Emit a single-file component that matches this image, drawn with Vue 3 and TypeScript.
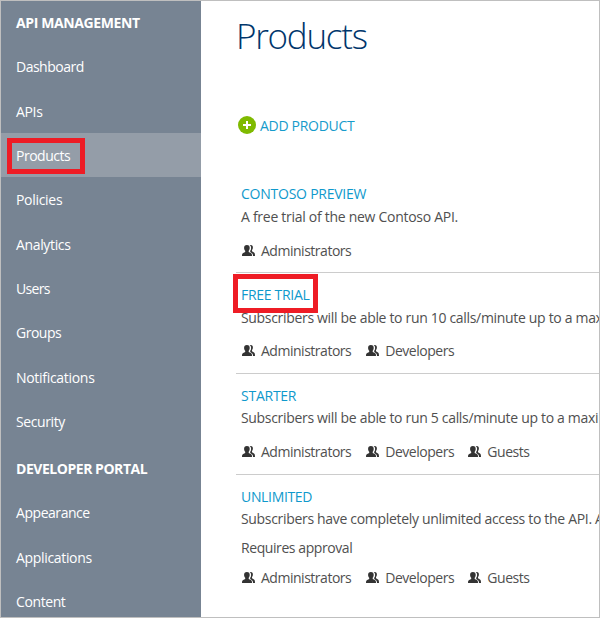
<script setup lang="ts">
interface NavItem {
  label: string
  fit: string
  heading?: boolean
  active?: boolean
}

interface Product {
  name: string
  fit: string
  description: string
  spacing: string
  approval?: string
  groups: string[]
  marked?: boolean
}

const nav: NavItem[] = [
  { label: 'API MANAGEMENT', fit: '-0.38px', heading: true },
  { label: 'Dashboard', fit: '-0.5px' },
  { label: 'APIs', fit: '-0.35px' },
  { label: 'Products', fit: '-0.5px', active: true },
  { label: 'Policies', fit: '-0.3px' },
  { label: 'Analytics', fit: '-0.35px' },
  { label: 'Users', fit: '-0.65px' },
  { label: 'Groups', fit: '-0.5px' },
  { label: 'Notifications', fit: '-0.3px' },
  { label: 'Security', fit: '-0.4px' },
  { label: 'DEVELOPER PORTAL', fit: '-0.46px', heading: true },
  { label: 'Appearance', fit: '-0.45px' },
  { label: 'Applications', fit: '-0.33px' },
  { label: 'Content', fit: '-0.4px' },
]

const products: Product[] = [
  {
    name: 'CONTOSO PREVIEW',
    fit: '-0.24px',
    description: 'A free trial of the new Contoso API.',
    spacing: '-0.28px',
    groups: ['Administrators'],
  },
  {
    name: 'FREE TRIAL',
    fit: '-0.3px',
    description: 'Subscribers will be able to run 10 calls/minute up to a maximum',
    spacing: '-0.32px',
    groups: ['Administrators', 'Developers'],
    marked: true,
  },
  {
    name: 'STARTER',
    fit: '-0.25px',
    description: 'Subscribers will be able to run 5 calls/minute up to a maximum',
    spacing: '-0.32px',
    groups: ['Administrators', 'Developers', 'Guests'],
  },
  {
    name: 'UNLIMITED',
    fit: '-0.33px',
    description: 'Subscribers have completely unlimited access to the API. A',
    spacing: '-0.32px',
    approval: 'Requires approval',
    groups: ['Administrators', 'Developers', 'Guests'],
  },
]
</script>

<template>
  <div class="window">
    <nav class="sidebar">
      <div
        v-for="item in nav"
        :key="item.label"
        class="nav-item"
        :class="{ heading: item.heading, active: item.active }"
      >
        <span class="nav-label" :style="{ letterSpacing: item.fit }">{{ item.label }}</span>
        <span v-if="item.active" class="marker nav-marker"></span>
      </div>
    </nav>
    <main class="content">
      <h1 class="title">Products</h1>
      <a class="add">
        <svg class="add-icon" viewBox="0 0 18 18">
          <circle cx="9" cy="9" r="9" fill="#7fba00" />
          <path d="M5 9h8M9 5v8" stroke="#fff" stroke-width="2" />
        </svg>
        <span class="add-label">ADD PRODUCT</span>
      </a>
      <section v-for="product in products" :key="product.name" class="product">
        <a class="name" :style="{ letterSpacing: product.fit }">{{ product.name }}</a>
        <span v-if="product.marked" class="marker product-marker"></span>
        <p class="description" :style="{ letterSpacing: product.spacing }">{{ product.description }}</p>
        <p v-if="product.approval" class="approval">{{ product.approval }}</p>
        <div class="groups">
          <span v-for="group in product.groups" :key="group" class="group">
            <svg class="people" viewBox="0 0 13 11">
              <path
                d="M7.600 0h1.200c1.400 0 2.200 1 2.100 2.600 0 1.200-.4 2-.9 2.600v1l2 1.300c.7.5 1 1.200 1 3.500h-2c-.1-1.600-.4-2.300-1.400-2.900L8.200 7V5.800c.6-.7.9-1.700.9-2.900 0-1.300-.5-2.300-1.500-2.900z"
                fill="#333"
              />
              <path
                d="M4.900 0c1.900 0 2.900 1.200 2.800 3 0 1.200-.4 2.200-1 2.800v1.100l2.100 1c1 .5 1.200 1.300 1.200 3.100H0c0-1.800.2-2.600 1.200-3.100l2-1V5.800c-.7-.6-1.100-1.600-1.100-2.800C2 1.200 3 0 4.900 0z"
                fill="#333"
              />
            </svg>
            <span class="group-label">{{ group }}</span>
          </span>
        </div>
      </section>
    </main>
  </div>
</template>

<style>
body {
  margin: 0;
  overflow: hidden;
}
</style>

<style scoped>
.window {
  box-sizing: border-box;
  display: flex;
  width: 600px;
  height: 618px;
  overflow: hidden;
  border: 1px solid #bfbfbf;
  background: #fff;
  font-family: "Open Sans", "Noto Sans", sans-serif;
  font-size: 14px;
  color: #505050;
}
.sidebar {
  flex: none;
  width: 200px;
  background: #778493;
  color: #fff;
  overflow: hidden;
}
.nav-item {
  position: relative;
  box-sizing: border-box;
  display: flex;
  align-items: center;
  height: 44.35px;
  padding: 1.1px 0 0 15px;
  line-height: 20px;
  white-space: nowrap;
}
.nav-item.heading {
  height: 47px;
  padding-top: 3.4px;
  font-weight: 700;
}
.nav-item.heading:first-child {
  height: 43.5px;
  padding-top: 0;
}
.nav-item.active {
  height: 44px;
  margin-bottom: 0.35px;
  padding-top: 1.4px;
  background: #949da8;
}
.marker {
  position: absolute;
  box-sizing: border-box;
  border: 5px solid #ee1c25;
}
.nav-marker {
  left: 6px;
  top: 5px;
  width: 78px;
  height: 36px;
}
.content {
  flex: 1;
  min-width: 0;
  padding-left: 35px;
  overflow: hidden;
}
.title {
  margin: 0;
  padding-top: 10px;
  height: 50px;
  line-height: 50px;
  font-size: 35px;
  font-weight: 300;
  letter-spacing: -1.25px;
  color: #00366c;
}
.add {
  display: flex;
  align-items: center;
  gap: 4px;
  height: 20px;
  margin-top: 54px;
  padding-left: 2px;
  letter-spacing: -0.3px;
  color: #169bcb;
}
.add-icon {
  width: 18px;
  height: 18px;
}
.product {
  position: relative;
  box-sizing: border-box;
  height: 100.75px;
  padding: 12px 0 0 5px;
  border-top: 1px solid #ccc;
  white-space: nowrap;
}
.add + .product {
  margin-top: 36.45px;
  border-top-color: transparent;
}
.name {
  display: block;
  height: 21.45px;
  line-height: 20px;
  color: #0f99cc;
}
.product-marker {
  left: -3px;
  top: 1px;
  width: 85px;
  height: 39px;
}
.description,
.approval {
  margin: 0;
  height: 22px;
  line-height: 22px;
}
.approval {
  margin-top: 7px;
  margin-bottom: -3.7px;
  letter-spacing: -0.42px;
}
.groups {
  display: flex;
  gap: 14px;
  margin-top: 12.15px;
  letter-spacing: -0.48px;
}
.group {
  display: flex;
  align-items: center;
  height: 20px;
}
.group:nth-child(3) {
  margin-left: -0.8px;
}
.people {
  width: 13px;
  height: 11px;
  margin: 0 6px 0 1px;
}
</style>
